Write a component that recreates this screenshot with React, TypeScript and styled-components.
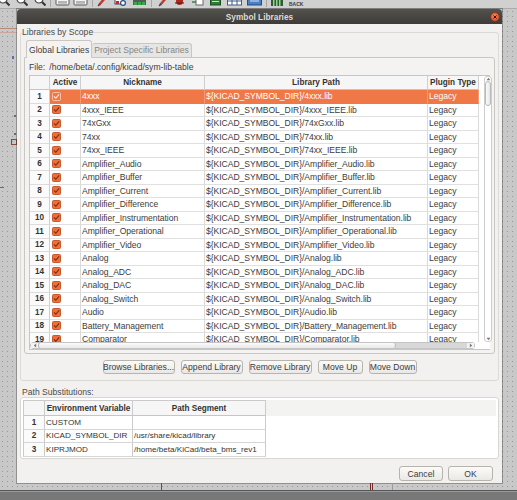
import React from "react";
import styled, { createGlobalStyle } from "styled-components";

const FONT = `"Liberation Sans", Arial, sans-serif`;

const GlobalStyle = createGlobalStyle`
  html, body {
    margin: 0;
    padding: 0;
    background: #c9c9c9;
  }
  body {
    font-family: ${FONT};
  }
  * {
    box-sizing: border-box;
  }
`;

const libraries = [
  "4xxx",
  "4xxx_IEEE",
  "74xGxx",
  "74xx",
  "74xx_IEEE",
  "Amplifier_Audio",
  "Amplifier_Buffer",
  "Amplifier_Current",
  "Amplifier_Difference",
  "Amplifier_Instrumentation",
  "Amplifier_Operational",
  "Amplifier_Video",
  "Analog",
  "Analog_ADC",
  "Analog_DAC",
  "Analog_Switch",
  "Audio",
  "Battery_Management",
  "Comparator",
];

const envVars = [
  { name: "CUSTOM", path: "" },
  { name: "KICAD_SYMBOL_DIR", path: "/usr/share/kicad/library" },
  { name: "KIPRJMOD", path: "/home/beta/KiCad/beta_bms_rev1" },
];

const LIB_COLS = "20px 31px 124px 223px 51px";
const ENV_COLS = "22px 88px 133px 1fr";

/* ---------- small drawings ---------- */

function MagIcon() {
  return (
    <svg width="12" height="14" viewBox="0 0 12 14">
      <circle cx="5" cy="6" r="4" fill="#fff" stroke="#4a4a4a" strokeWidth="1.2" />
      <line x1="8" y1="9" x2="11.5" y2="12.5" stroke="#333" strokeWidth="2" />
    </svg>
  );
}

function SheetIcon() {
  return (
    <svg width="15" height="14" viewBox="0 0 15 14">
      <rect x="1" y="3" width="13" height="9" rx="1" fill="#f2f2f2" stroke="#5a5a5a" />
      <line x1="3" y1="9" x2="12" y2="9" stroke="#777" />
      <line x1="3" y1="11" x2="12" y2="11" stroke="#999" />
    </svg>
  );
}

function PencilIcon() {
  return (
    <svg width="10" height="14" viewBox="0 0 10 14">
      <line x1="2" y1="12" x2="9" y2="4" stroke="#c0392b" strokeWidth="2.4" />
      <line x1="1" y1="13" x2="3" y2="11" stroke="#444" strokeWidth="1.2" />
    </svg>
  );
}

function ChipIcon() {
  return (
    <svg width="12" height="14" viewBox="0 0 12 14">
      <rect x="1" y="2" width="8" height="9" fill="#fff" stroke="#444" />
      <rect x="2" y="8" width="3" height="3" fill="#c62828" />
      <circle cx="9" cy="10" r="2.4" fill="#fff" stroke="#1f4f8f" strokeWidth="1.2" />
    </svg>
  );
}

function BoardIcon() {
  return (
    <svg width="15" height="14" viewBox="0 0 15 14">
      <rect x="1" y="4" width="13" height="8" fill="#5a5a5a" />
      <rect x="2" y="9" width="3" height="3" fill="#3aa84a" />
      <rect x="6" y="9" width="3" height="3" fill="#3aa84a" />
      <rect x="10" y="9" width="3" height="3" fill="#3aa84a" />
    </svg>
  );
}

function BugIcon() {
  return (
    <svg width="11" height="14" viewBox="0 0 11 14">
      <ellipse cx="5.5" cy="8" rx="3.5" ry="4" fill="#b3261e" />
      <line x1="1" y1="10" x2="10" y2="10" stroke="#4a1a14" />
    </svg>
  );
}

function NetIcon() {
  return (
    <svg width="13" height="14" viewBox="0 0 13 14">
      <rect x="5" y="5" width="7" height="7" fill="#fff" stroke="#666" />
      <line x1="1" y1="9" x2="5" y2="9" stroke="#2e7d32" strokeWidth="1.4" />
    </svg>
  );
}

function GreenBoxIcon() {
  return (
    <svg width="11" height="14" viewBox="0 0 11 14">
      <rect x="0.5" y="5" width="10" height="7" fill="#2f7a36" stroke="#1c4d21" />
      <line x1="2" y1="8.5" x2="9" y2="8.5" stroke="#bfe6c2" />
    </svg>
  );
}

function TableIcon() {
  return (
    <svg width="15" height="14" viewBox="0 0 15 14">
      <rect x="0.5" y="4" width="14" height="8" fill="#fff" stroke="#3b5f8a" />
      <line x1="0.5" y1="8" x2="14.5" y2="8" stroke="#3b5f8a" />
      <line x1="5" y1="4" x2="5" y2="12" stroke="#3b5f8a" />
      <line x1="10" y1="4" x2="10" y2="12" stroke="#3b5f8a" />
    </svg>
  );
}

function BlueBoxIcon() {
  return (
    <svg width="15" height="14" viewBox="0 0 15 14">
      <rect x="0.5" y="4" width="14" height="8" fill="#4a7fc1" stroke="#234d84" />
      <line x1="3" y1="8" x2="12" y2="8" stroke="#d6e6fa" />
    </svg>
  );
}

function BarsIcon() {
  return (
    <svg width="12" height="14" viewBox="0 0 12 14">
      <rect x="0" y="2" width="12" height="11" fill="#2e5e2e" />
      <rect x="2" y="4" width="1.5" height="9" fill="#8fd18f" />
      <rect x="5" y="4" width="1.5" height="9" fill="#8fd18f" />
      <rect x="8" y="4" width="1.5" height="9" fill="#8fd18f" />
    </svg>
  );
}

function CheckBox({ selected }: { selected?: boolean }) {
  return (
    <svg width="9" height="9" viewBox="0 0 9 9">
      <rect
        x="0.5"
        y="0.5"
        width="8"
        height="8"
        rx="1"
        fill={selected ? "#f07746" : "#ef6e3a"}
        stroke={selected ? "#f8c2a8" : "#c9592c"}
      />
      <path
        d="M2 4.4 L3.8 6.3 L7.1 2.4"
        fill="none"
        stroke={selected ? "#fff4ee" : "#7c2a0c"}
        strokeWidth="1.1"
      />
    </svg>
  );
}

function CloseIcon() {
  return (
    <svg width="10" height="10" viewBox="0 0 10 10">
      <defs>
        <radialGradient id="closeGrad" cx="0.45" cy="0.35" r="0.7">
          <stop offset="0" stopColor="#f7845a" />
          <stop offset="1" stopColor="#d9471d" />
        </radialGradient>
      </defs>
      <circle cx="5" cy="5" r="4.4" fill="url(#closeGrad)" stroke="#7e2c12" strokeWidth="0.6" />
      <path d="M3.5 3.5 L6.5 6.5 M6.5 3.5 L3.5 6.5" stroke="#3a160a" strokeWidth="1" />
    </svg>
  );
}

function UpArrow() {
  return (
    <svg width="5" height="4" viewBox="0 0 5 4">
      <path d="M0.5 3.2 L2.5 0.8 L4.5 3.2 Z" fill="#7a7a7a" />
    </svg>
  );
}

function DownArrow() {
  return (
    <svg width="5" height="4" viewBox="0 0 5 4">
      <path d="M0.5 0.8 L2.5 3.2 L4.5 0.8 Z" fill="#7a7a7a" />
    </svg>
  );
}

function LeftArrow() {
  return (
    <svg width="4" height="5" viewBox="0 0 4 5">
      <path d="M3.2 0.5 L0.8 2.5 L3.2 4.5 Z" fill="#7a7a7a" />
    </svg>
  );
}

function RightArrow() {
  return (
    <svg width="4" height="5" viewBox="0 0 4 5">
      <path d="M0.8 0.5 L3.2 2.5 L0.8 4.5 Z" fill="#7a7a7a" />
    </svg>
  );
}

/* schematic leftovers peeking out around the dialog */
function LeftWires() {
  return (
    <svg width="17" height="474" viewBox="0 0 17 474">
      <line x1="0" y1="19.5" x2="17" y2="19.5" stroke="#b58a7a" />
      <line x1="0" y1="23.5" x2="17" y2="23.5" stroke="#c9a59a" />
      <rect x="12" y="47" width="2" height="3" fill="#5d6f9a" />
      <rect x="14" y="106" width="2" height="2" fill="#6a6a6a" />
      <rect x="14" y="124" width="2" height="2" fill="#6a6a6a" />
      <rect x="11.5" y="130.5" width="5" height="5" fill="none" stroke="#8a4a3a" />
      <rect x="0" y="178" width="4" height="1" fill="#b0553a" />
    </svg>
  );
}

function BottomWires() {
  return (
    <svg width="517" height="7" viewBox="0 0 517 7">
      <line x1="161.5" y1="0" x2="161.5" y2="7" stroke="#7a4a3e" />
      <line x1="370.5" y1="0" x2="370.5" y2="7" stroke="#6e2a1e" />
      <line x1="372.5" y1="0" x2="372.5" y2="7" stroke="#6e2a1e" />
      <line x1="392.5" y1="0" x2="392.5" y2="7" stroke="#9a9a9a" />
    </svg>
  );
}

/* ---------- page frame ---------- */

const Screen = styled.div`
  width: 517px;
  height: 500px;
  display: flex;
  flex-direction: column;
  overflow: hidden;
  font-family: ${FONT};
  font-size: 8.6px;
  color: #3c3c3c;
`;

const Toolbar = styled.div`
  height: 9px;
  flex: none;
  display: flex;
  align-items: flex-start;
  overflow: hidden;
  background: #d0d0d0;
  border-bottom: 1px solid #ababab;
`;

const Tool = styled.div<{ $gap?: number }>`
  display: flex;
  margin-left: ${(p) => p.$gap ?? 4}px;
  margin-top: -7px;
`;

const ToolSep = styled.div`
  width: 1px;
  height: 7px;
  margin-left: 4px;
  background: #a5a5a5;
`;

const BackLabel = styled.span`
  margin-left: 6px;
  font-size: 5px;
  font-weight: bold;
  line-height: 8px;
  color: #3a3a3a;
`;

const Workspace = styled.div`
  flex: 1;
  display: flex;
  flex-direction: column;
  background-color: #c8c8c8;
  background-image: radial-gradient(circle, #979797 0.7px, transparent 1px);
  background-size: 5px 5px;
`;

const MainRow = styled.div`
  height: 474px;
  display: flex;
`;

const SideStrip = styled.div<{ $w?: number }>`
  flex: ${(p) => (p.$w ? "none" : "1")};
  width: ${(p) => (p.$w ? `${p.$w}px` : "auto")};
  display: flex;
`;

const BottomStrip = styled.div`
  height: 7px;
  display: flex;
`;

const StatusBar = styled.div`
  height: 10px;
  flex: none;
  background: #787878;
  border-top: 1px solid #555;
  box-shadow: inset 0 1px 0 #9a9a9a;
`;

/* ---------- dialog ---------- */

const Dialog = styled.div`
  width: 485px;
  flex: none;
  display: flex;
  flex-direction: column;
  box-shadow: 0 0 0 1px rgba(40, 40, 40, 0.35);
`;

const TitleBar = styled.div`
  height: 15px;
  display: grid;
  grid-template-columns: 1fr auto 1fr;
  align-items: center;
  background: linear-gradient(#53524d, #3c3b37);
  border-radius: 4px 4px 0 0;
`;

const Title = styled.div`
  grid-column: 2;
  font-size: 8.3px;
  font-weight: bold;
  color: #dfdbd2;
  white-space: nowrap;
`;

const CloseButton = styled.div`
  justify-self: end;
  display: flex;
  margin-right: 2px;
`;

const Body = styled.div`
  flex: 1;
  display: flex;
  flex-direction: column;
  padding: 0 3px 2px;
  background: #f2f1f0;
`;

const Group = styled.fieldset`
  margin: 3px 0 0;
  padding: 3px 3px 6px;
  min-width: 0;
  border: 1px solid #dcdad5;
  border-radius: 3px;
`;

const GroupLegend = styled.legend`
  padding: 0;
  margin-left: -2px;
  font-size: 8.6px;
  line-height: 10px;
  color: #4a4a4a;
`;

const GroupInner = styled.div`
  display: flex;
  flex-direction: column;
  gap: 8px;
`;

const Notebook = styled.div`
  height: 312px;
  display: flex;
  flex-direction: column;
`;

const TabStrip = styled.div`
  height: 17px;
  display: flex;
  align-items: flex-end;
  padding-left: 2px;
`;

const Tab = styled.div<{ $active?: boolean }>`
  position: relative;
  z-index: ${(p) => (p.$active ? 1 : 0)};
  height: ${(p) => (p.$active ? 18 : 14)}px;
  margin-bottom: ${(p) => (p.$active ? -1 : 0)}px;
  padding: 0 2px;
  display: flex;
  align-items: center;
  white-space: nowrap;
  border: 1px solid #c9c7c2;
  border-bottom: ${(p) => (p.$active ? "none" : "0")};
  border-left: ${(p) => (p.$active ? "1px solid #c9c7c2" : "none")};
  border-radius: 3px 3px 0 0;
  background: ${(p) => (p.$active ? "#f4f3f2" : "#e6e5e3")};
  color: ${(p) => (p.$active ? "#3c3c3c" : "#858585")};
  line-height: ${(p) => (p.$active ? 16 : 13)}px;
`;

const Panel = styled.div`
  flex: 1;
  display: flex;
  flex-direction: column;
  gap: 2px;
  padding: 2px 4px 3px;
  border: 1px solid #c9c7c2;
  border-radius: 0 3px 3px 3px;
  background: #f4f3f2;
`;

const FileRow = styled.div`
  height: 13px;
  display: flex;
  align-items: center;
  gap: 4px;
  color: #3c3c3c;
  white-space: nowrap;
`;

/* ---------- library grid ---------- */

const GridFrame = styled.div`
  display: grid;
  grid-template-columns: 450px 1fr;
  grid-template-rows: 266px 7px;
  border: 1px solid #c6c6c6;
  border-right: none;
  background: #fff;
`;

const Viewport = styled.div`
  overflow: hidden;
`;

const LibRow = styled.div<{ $header?: boolean }>`
  display: grid;
  grid-template-columns: ${LIB_COLS};
  height: ${(p) => (p.$header ? 14 : 13.5)}px;
`;

const HeadCell = styled.div`
  display: flex;
  align-items: center;
  justify-content: center;
  overflow: hidden;
  white-space: nowrap;
  background: #f6f6f6;
  border-right: 1px solid #cfcfcf;
  border-bottom: 1px solid #c4c4c4;
  font-size: 8.2px;
  font-weight: bold;
  color: #333;
`;

const LabelCell = styled.div`
  display: flex;
  align-items: center;
  justify-content: center;
  background: #fbfbfb;
  border-right: 1px solid #cfcfcf;
  border-bottom: 1px solid #dcdcdc;
  font-size: 8.2px;
  font-weight: bold;
  color: #333;
`;

const DataCell = styled.div<{ $selected?: boolean }>`
  display: flex;
  align-items: center;
  padding-left: 1px;
  overflow: hidden;
  white-space: nowrap;
  letter-spacing: -0.05px;
  background: ${(p) => (p.$selected ? "#f07746" : "#fff")};
  color: ${(p) => (p.$selected ? "#fff" : "#3c3c3c")};
  border-right: 1px solid ${(p) => (p.$selected ? "#f39a74" : "#dadada")};
  border-bottom: 1px solid ${(p) => (p.$selected ? "#f07746" : "#e0e0e0")};
`;

const CheckCell = styled(DataCell)`
  padding-left: 2px;
`;

const VScroll = styled.div`
  display: flex;
  padding: 0 1px 0 4px;
`;

const VTrough = styled.div`
  flex: 1;
  display: flex;
  flex-direction: column;
  align-items: center;
  border: 1px solid #cdcdcd;
  border-radius: 3px;
  background: #fff;
`;

const VThumb = styled.div`
  width: 6px;
  height: 25px;
  border: 1px solid #b9b9b9;
  border-radius: 3px;
  background: linear-gradient(90deg, #fafafa, #e6e6e6);
`;

const Spacer = styled.div`
  flex: 1;
`;

const HScroll = styled.div`
  display: flex;
  align-items: center;
  border: 1px solid #c4c4c4;
  border-radius: 3px;
  background: #d8d8d8;
  margin-right: 5px;
`;

const ArrowCap = styled.div`
  width: 7px;
  height: 100%;
  display: flex;
  align-items: center;
  justify-content: center;
  background: #f4f4f4;
`;

const HThumb = styled.div`
  width: 358px;
  height: 100%;
  border-left: 1px solid #b9b9b9;
  border-right: 1px solid #b9b9b9;
  border-radius: 3px;
  background: linear-gradient(#fbfbfb, #e9e9e9);
`;

/* ---------- buttons ---------- */

const ButtonRow = styled.div<{ $align?: string }>`
  display: flex;
  justify-content: ${(p) => p.$align ?? "center"};
  gap: 6px;
`;

const Button = styled.div<{ $width: number; $height?: number }>`
  width: ${(p) => p.$width}px;
  height: ${(p) => p.$height ?? 14}px;
  display: flex;
  align-items: center;
  justify-content: center;
  white-space: nowrap;
  border: 1px solid #b7b4ae;
  border-radius: 3px;
  background: linear-gradient(#fbfbfa, #e9e8e5);
  color: #3c3c3c;
`;

/* ---------- path substitutions ---------- */

const SubLabel = styled.div`
  margin-top: 7px;
  padding-left: 2px;
  line-height: 9px;
  color: #4a4a4a;
`;

const EnvFrame = styled.div`
  height: 62px;
  padding: 2px 2px 0;
  border: 1px solid #d9d7d2;
  border-radius: 3px;
  background: #fff;
`;

const EnvRow = styled.div<{ $header?: boolean }>`
  display: grid;
  grid-template-columns: ${ENV_COLS};
  height: ${(p) => (p.$header ? 16 : 13.5)}px;
  background: ${(p) => (p.$header ? "#f3f3f2" : "#fff")};
`;

const EnvCell = styled.div<{ $header?: boolean; $label?: boolean; $first?: boolean }>`
  display: flex;
  align-items: center;
  justify-content: ${(p) => (p.$header || p.$label ? "center" : "flex-start")};
  padding-left: ${(p) => (p.$header || p.$label ? 0 : 1)}px;
  overflow: hidden;
  white-space: nowrap;
  border-right: 1px solid #cbcbcb;
  border-bottom: 1px solid ${(p) => (p.$header ? "#c6c6c6" : "#d6d6d6")};
  border-left: ${(p) => (p.$first ? "1px solid #cbcbcb" : "none")};
  border-top: ${(p) => (p.$header ? "1px solid #cbcbcb" : "none")};
  background: ${(p) => (p.$header ? "#f6f6f6" : p.$label ? "#fbfbfb" : "#fff")};
  font-size: ${(p) => (p.$header || p.$label ? 8.2 : 8.1)}px;
  font-weight: ${(p) => (p.$header || p.$label ? "bold" : "normal")};
  color: #333;
`;

const Footer = styled(ButtonRow)`
  margin-top: auto;
  padding-right: 6px;
  gap: 5px;
`;

/* ---------- components ---------- */

function LibraryGrid() {
  return (
    <GridFrame>
      <Viewport>
        <LibRow $header>
          <HeadCell />
          <HeadCell>Active</HeadCell>
          <HeadCell>Nickname</HeadCell>
          <HeadCell>Library Path</HeadCell>
          <HeadCell>Plugin Type</HeadCell>
        </LibRow>
        {libraries.map((name, i) => {
          const selected = i === 0;
          return (
            <LibRow key={name}>
              <LabelCell>{i + 1}</LabelCell>
              <CheckCell $selected={selected}>
                <CheckBox selected={selected} />
              </CheckCell>
              <DataCell $selected={selected}>{name}</DataCell>
              <DataCell $selected={selected}>{`\${KICAD_SYMBOL_DIR}/${name}.lib`}</DataCell>
              <DataCell $selected={selected}>Legacy</DataCell>
            </LibRow>
          );
        })}
      </Viewport>
      <VScroll>
        <VTrough>
          <UpArrow />
          <VThumb />
          <Spacer />
          <DownArrow />
        </VTrough>
      </VScroll>
      <HScroll>
        <ArrowCap>
          <LeftArrow />
        </ArrowCap>
        <HThumb />
        <Spacer />
        <ArrowCap>
          <RightArrow />
        </ArrowCap>
      </HScroll>
    </GridFrame>
  );
}

function EnvTable() {
  return (
    <EnvFrame>
      <EnvRow $header>
        <EnvCell $header $first />
        <EnvCell $header>Environment Variable</EnvCell>
        <EnvCell $header>Path Segment</EnvCell>
      </EnvRow>
      {envVars.map((v, i) => (
        <EnvRow key={v.name}>
          <EnvCell $label $first>
            {i + 1}
          </EnvCell>
          <EnvCell>{v.name}</EnvCell>
          <EnvCell>{v.path}</EnvCell>
        </EnvRow>
      ))}
    </EnvFrame>
  );
}

export default function App() {
  return (
    <>
      <GlobalStyle />
      <Screen>
        <Toolbar>
          <Tool $gap={-2}>
            <MagIcon />
          </Tool>
          <Tool $gap={6}>
            <MagIcon />
          </Tool>
          <Tool $gap={6}>
            <MagIcon />
          </Tool>
          <ToolSep />
          <Tool>
            <SheetIcon />
          </Tool>
          <Tool $gap={3}>
            <SheetIcon />
          </Tool>
          <ToolSep />
          <Tool>
            <PencilIcon />
          </Tool>
          <Tool $gap={7}>
            <ChipIcon />
          </Tool>
          <Tool $gap={6}>
            <BoardIcon />
          </Tool>
          <ToolSep />
          <Tool $gap={6}>
            <PencilIcon />
          </Tool>
          <Tool $gap={6}>
            <BugIcon />
          </Tool>
          <Tool $gap={6}>
            <NetIcon />
          </Tool>
          <Tool $gap={6}>
            <GreenBoxIcon />
          </Tool>
          <Tool $gap={6}>
            <TableIcon />
          </Tool>
          <Tool $gap={5}>
            <BlueBoxIcon />
          </Tool>
          <ToolSep />
          <Tool>
            <BarsIcon />
          </Tool>
          <BackLabel>BACK</BackLabel>
        </Toolbar>

        <Workspace>
          <MainRow>
            <SideStrip $w={17}>
              <LeftWires />
            </SideStrip>

            <Dialog>
              <TitleBar>
                <Title>Symbol Libraries</Title>
                <CloseButton>
                  <CloseIcon />
                </CloseButton>
              </TitleBar>

              <Body>
                <Group>
                  <GroupLegend>Libraries by Scope</GroupLegend>
                  <GroupInner>
                    <Notebook>
                      <TabStrip>
                        <Tab $active>Global Libraries</Tab>
                        <Tab>Project Specific Libraries</Tab>
                      </TabStrip>
                      <Panel>
                        <FileRow>
                          <span>File:</span>
                          <span>/home/beta/.config/kicad/sym-lib-table</span>
                        </FileRow>
                        <LibraryGrid />
                      </Panel>
                    </Notebook>

                    <ButtonRow>
                      <Button $width={72}>Browse Libraries...</Button>
                      <Button $width={62}>Append Library</Button>
                      <Button $width={63}>Remove Library</Button>
                      <Button $width={45}>Move Up</Button>
                      <Button $width={48}>Move Down</Button>
                    </ButtonRow>
                  </GroupInner>
                </Group>

                <SubLabel>Path Substitutions:</SubLabel>
                <EnvTable />

                <Footer $align="flex-end">
                  <Button $width={44} $height={15}>
                    Cancel
                  </Button>
                  <Button $width={45} $height={15}>
                    OK
                  </Button>
                </Footer>
              </Body>
            </Dialog>

            <SideStrip />
          </MainRow>
          <BottomStrip>
            <BottomWires />
          </BottomStrip>
        </Workspace>

        <StatusBar />
      </Screen>
    </>
  );
}
